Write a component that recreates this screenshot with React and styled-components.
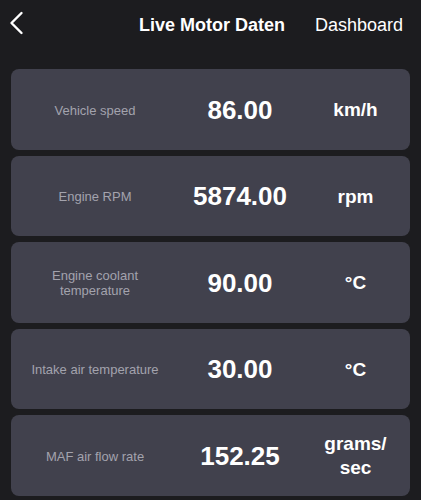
import styled, { createGlobalStyle } from "styled-components";

const GlobalStyle = createGlobalStyle`
  body {
    margin: 0;
    background: #1c1c1f;
    font-family: "Liberation Sans", Arial, sans-serif;
  }
`;

const Page = styled.div`
  width: 421px;
  height: 500px;
  overflow: hidden;
  background: #1c1c1f;
  color: #fff;
`;

const TopBar = styled.div`
  display: flex;
  align-items: center;
  height: 50px;
  padding: 0 18px 0 8px;
`;

const BackButton = styled.button`
  display: flex;
  align-items: center;
  background: none;
  border: 0;
  padding: 0;
  margin-top: -4px;
  color: #fff;
`;

const Title = styled.div`
  margin-left: auto;
  font-size: 18px;
  font-weight: bold;
`;

const NavLink = styled.div`
  margin-left: 30px;
  font-size: 18px;
`;

const List = styled.div`
  display: flex;
  flex-direction: column;
  gap: 6px;
  padding: 19px 11px 0;
`;

const Card = styled.div`
  display: grid;
  grid-template-columns: 168px 122px 109px;
  align-items: center;
  height: 80.5px;
  padding-top: 2px;
  box-sizing: border-box;
  background: #41414d;
  border-radius: 8px;
`;

const Label = styled.div`
  text-align: center;
  font-size: 13px;
  line-height: 15px;
  color: #a3a3ad;
  padding: 0 4px;
`;

const Value = styled.div`
  text-align: center;
  font-size: 26px;
  font-weight: bold;
`;

const Unit = styled.div`
  text-align: center;
  font-size: 19px;
  line-height: 24px;
  font-weight: bold;
`;

const rows = [
  { label: "Vehicle speed", value: "86.00", unit: "km/h" },
  { label: "Engine RPM", value: "5874.00", unit: "rpm" },
  { label: <>Engine coolant<br />temperature</>, value: "90.00", unit: "°C" },
  { label: "Intake air temperature", value: "30.00", unit: "°C" },
  { label: "MAF air flow rate", value: "152.25", unit: <>grams/<br />sec</> },
];

export default function App() {
  return (
    <Page>
      <GlobalStyle />
      <TopBar>
        <BackButton>
          <svg width="16" height="24" viewBox="0 0 16 24" fill="none">
            <path d="M13.5 2 L3.5 12 L13.5 22" stroke="#fff" strokeWidth="2.4" strokeLinecap="round" strokeLinejoin="round" />
          </svg>
        </BackButton>
        <Title>Live Motor Daten</Title>
        <NavLink>Dashboard</NavLink>
      </TopBar>
      <List>
        {rows.map((r, i) => (
          <Card key={i}>
            <Label>{r.label}</Label>
            <Value>{r.value}</Value>
            <Unit>{r.unit}</Unit>
          </Card>
        ))}
      </List>
    </Page>
  );
}
